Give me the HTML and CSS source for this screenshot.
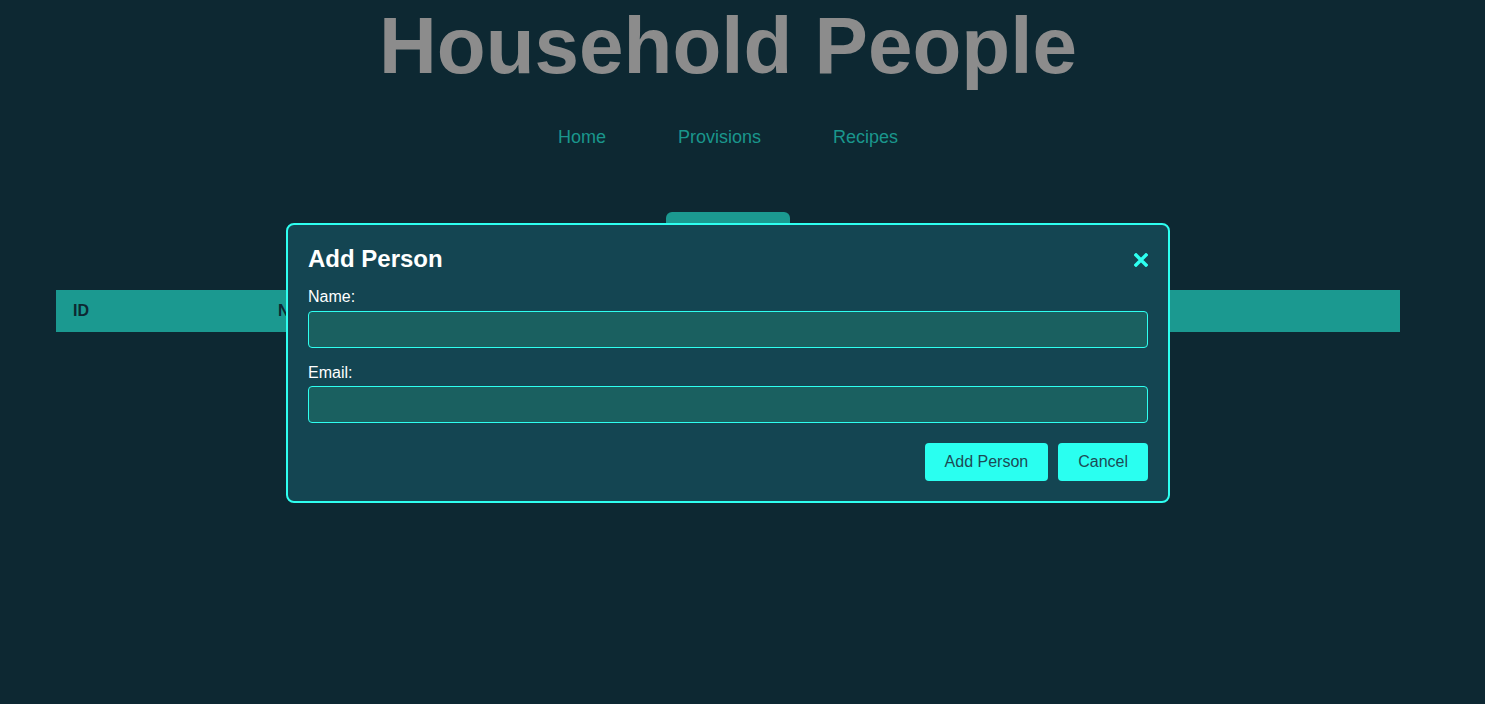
FILE: index.html
```html
<!DOCTYPE html>
<html lang="en">
<head>
<meta charset="utf-8">
<title>Household People</title>
<link rel="stylesheet" href="styles.css">
</head>
<body>
<div class="page">
  <h1 class="title">Household People</h1>
  <nav class="nav">
    <a href="#" class="nav-link">Home</a>
    <a href="#" class="nav-link">Provisions</a>
    <a href="#" class="nav-link">Recipes</a>
  </nav>
  <div class="toolbar">
    <button class="open-btn">Add Person</button>
  </div>
  <div class="table">
    <div class="thead">
      <div class="th th-id">ID</div>
      <div class="th th-name">Name</div>
      <div class="th th-email">Email</div>
    </div>
  </div>

  <div class="modal">
    <div class="modal-head">
      <h2 class="modal-title">Add Person</h2>
      <span class="close" aria-label="close">
        <svg width="14" height="14" viewBox="0 0 14 14"><path d="M2 2 L12 12 M12 2 L2 12" stroke="#2efff0" stroke-width="3.4" stroke-linecap="square"/></svg>
      </span>
    </div>
    <label class="field-label field-first">Name:</label>
    <input class="field-input" type="text">
    <label class="field-label">Email:</label>
    <input class="field-input" type="text">
    <div class="actions">
      <button class="btn">Add Person</button>
      <button class="btn">Cancel</button>
    </div>
  </div>
</div>
</body>
</html>
```
FILE: styles.css
```css
html, body {
  margin: 0;
  padding: 0;
  background: #0d2832;
  font-family: "Liberation Sans", Arial, sans-serif;
  height: 100%;
}
.page {
  width: 1456px;
  position: relative;
  min-height: 704px;
}
.title {
  margin: 0;
  text-align: center;
  font-size: 80px;
  font-weight: bold;
  color: #8c8c8c;
  line-height: 92px;
}
.nav {
  display: flex;
  justify-content: center;
  gap: 72px;
  margin-top: 35px;
}
.nav-link {
  color: #1a968c;
  text-decoration: none;
  font-size: 18px;
  line-height: 21px;
}
.toolbar {
  display: flex;
  justify-content: center;
  margin-top: 64px;
}
.open-btn {
  width: 124px;
  height: 40px;
  border: none;
  border-radius: 6px;
  background: #1b9990;
  color: #0d2832;
  font-family: inherit;
  font-size: 16px;
}
.table {
  margin: 38px 56px 0;
}
.thead {
  display: grid;
  grid-template-columns: 205px 400px 1fr;
  background: #1b9990;
  height: 42px;
  align-items: center;
}
.th {
  padding-left: 17px;
  font-weight: bold;
  font-size: 16px;
  color: #0d2832;
}
.modal {
  position: absolute;
  left: 286px;
  top: 223px;
  width: 840px;
  padding: 20px 20px 20px;
  background: #144552;
  border: 2px solid #2efff0;
  border-radius: 8px;
  display: flex;
  flex-direction: column;
}
.modal-head {
  display: flex;
  justify-content: space-between;
  align-items: center;
  height: 30px;
  margin-top: -1px;
}
.modal-title {
  margin: 0;
  font-size: 24px;
  font-weight: bold;
  color: #ffffff;
}
.close {
  display: flex;
  margin-top: 2px;
}
.field-label {
  color: #ffffff;
  font-size: 16px;
  line-height: 18px;
  margin-top: 16px;
  margin-bottom: 4px;
}
.field-first {
  margin-top: 14px;
  margin-bottom: 5px;
}
.field-input {
  box-sizing: border-box;
  width: 100%;
  height: 37px;
  margin: 0;
  background: #1a6060;
  border: 1px solid #2efff0;
  border-radius: 4px;
  color: #ffffff;
  font-family: inherit;
  font-size: 16px;
}
.actions {
  display: flex;
  justify-content: flex-end;
  gap: 10px;
  margin-top: 20px;
}
.btn {
  height: 38px;
  padding: 0 20px;
  border: none;
  border-radius: 4px;
  background: #2afff0;
  color: #1d4a55;
  font-family: inherit;
  font-size: 16px;
}
```
